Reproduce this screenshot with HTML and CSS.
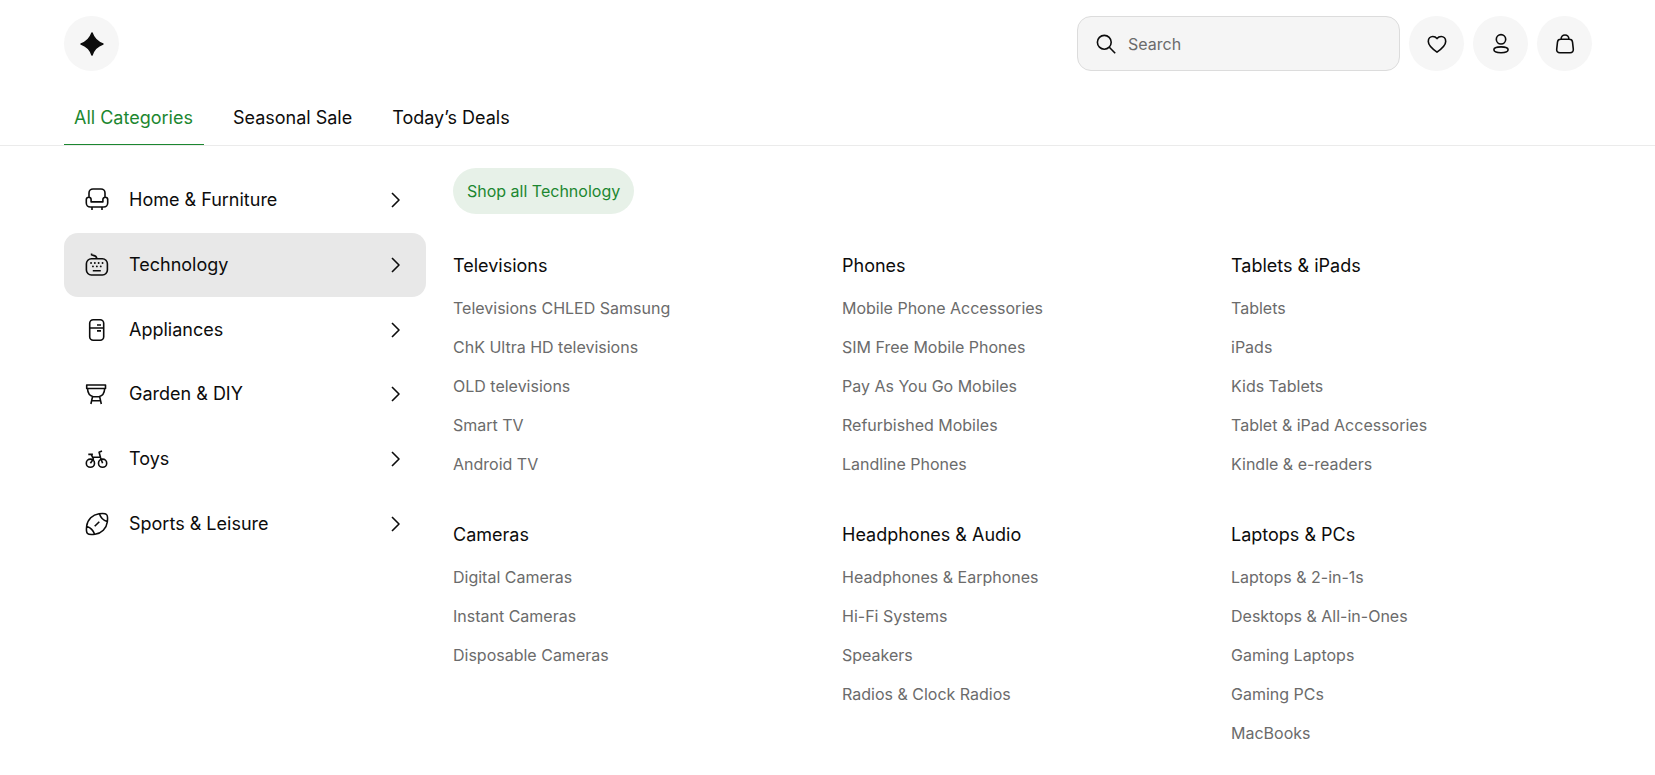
FILE: index.html
```html
<!DOCTYPE html>
<html lang="en">
<head>
<meta charset="utf-8">
<meta name="viewport" content="width=device-width, initial-scale=1">
<title>Technology</title>
<link rel="stylesheet" href="styles.css">
</head>
<body>
<header class="topbar">
  <a class="round" href="#" aria-label="Home page">
    <svg class="icon" viewBox="0 0 28 28"><path fill="currentColor" d="M14 3.100C15.700 8.100 19.300 12.100 24.900 14 19.300 15.900 15.700 19.900 14 24.900 12.300 19.900 8.700 15.900 3.100 14 8.700 12.100 12.300 8.100 14 3.100z"/></svg>
  </a>
  <div class="tools">
    <label class="search">
      <svg class="icon" viewBox="0 0 28 28"><circle cx="12.300" cy="12.300" r="6.900"/><path d="M17.300 17.300l5.900 5.900"/></svg>
      <input class="search-input" type="search" placeholder="Search" aria-label="Search">
    </label>
    <button class="round" type="button" aria-label="Wishlist">
      <svg class="icon" viewBox="0 0 28 28"><path d="M14 22.100C10 19.300 5.300 15.800 5.300 11.500c0-3 2-5 4.500-5 1.800 0 3.200.8 4.200 2.100 1-1.300 2.400-2.100 4.200-2.100 2.500 0 4.500 2 4.500 5 0 4.300-4.700 7.800-8.700 10.600z"/></svg>
    </button>
    <button class="round" type="button" aria-label="Account">
      <svg class="icon" viewBox="0 0 28 28"><circle cx="14" cy="9.300" r="4.700"/><path d="M14 16.900c4.400 0 7.100.5 7.100 2.900s-2 2.900-7.100 2.900-7.100-.5-7.100-2.900 2.700-2.900 7.100-2.900z"/></svg>
    </button>
    <button class="round" type="button" aria-label="Bag">
      <svg class="icon" viewBox="0 0 28 28"><path d="M9.700 9.300h8.600c1.800 0 3 1 3.200 2.700l.8 7.200c.2 2.200-1 3.500-3.200 3.500H8.900c-2.200 0-3.400-1.300-3.200-3.500l.8-7.200c.2-1.700 1.400-2.700 3.200-2.700zM10 9c.3-2.500 1.800-4 4-4s3.700 1.500 4 4"/></svg>
    </button>
  </div>
</header>
<nav class="tabs" aria-label="Main">
  <a class="tab tab-active" href="#">All Categories</a>
  <a class="tab" href="#">Seasonal Sale</a>
  <a class="tab" href="#">Today’s Deals</a>
</nav>
<div class="menu">
  <nav class="departments" aria-label="Departments">
    <a class="department" href="#">
      <svg class="icon" viewBox="0 0 28 28"><path d="M6 11V7a4 4 0 0 1 4-4h8a4 4 0 0 1 4 4v4M5.700 11.200a2.400 2.400 0 0 0-2.400 2.400V17a4 4 0 0 0 4 4h13.400a4 4 0 0 0 4-4v-3.400a2.400 2.400 0 0 0-4.800 0v2.300H8.100v-2.300a2.400 2.400 0 0 0-2.400-2.400zM9 21.500V24M19 21.500V24"/></svg>
      <span>Home &amp; Furniture</span>
      <svg class="chevron" viewBox="0 0 10 16"><path d="M1 1l7 7-7 7"/></svg>
    </a>
    <a class="department department-active" href="#">
      <svg class="icon" viewBox="0 0 28 28"><rect x="3.400" y="7.800" width="21" height="16.200" rx="5"/><path d="M8.600 2.600v1.300c1.500.9 4.800.1 5.200 3.600M9.800 19.700h8"/><path stroke-linecap="round" stroke-width="1.800" d="M8 12h.1M11.800 12h.1M15.600 12h.1M19.500 12h.1M9.900 15.400h.1M13.800 15.400h.1M17.700 15.400h.1"/></svg>
      <span>Technology</span>
      <svg class="chevron" viewBox="0 0 10 16"><path d="M1 1l7 7-7 7"/></svg>
    </a>
    <a class="department" href="#">
      <svg class="icon" viewBox="0 0 28 28"><rect x="6.700" y="3.700" width="14" height="20.600" rx="3.500"/><path d="M6.700 12h14M14 9h4M14 14.900h4"/></svg>
      <span>Appliances</span>
      <svg class="chevron" viewBox="0 0 10 16"><path d="M1 1l7 7-7 7"/></svg>
    </a>
    <a class="department" href="#">
      <svg class="icon" viewBox="0 0 28 28"><path d="M3.700 5h18.800v3.500H3.700zM4.500 8.500c.2 4 2.300 7.400 5.700 8.200h5.800c3.400-.8 5.500-4.200 5.700-8.200M9.500 16.800L7.900 24M16.700 16.800l1.600 7.200M8.700 20.800h8.800"/></svg>
      <span>Garden &amp; DIY</span>
      <svg class="chevron" viewBox="0 0 10 16"><path d="M1 1l7 7-7 7"/></svg>
    </a>
    <a class="department" href="#">
      <svg class="icon" viewBox="0 0 28 28"><circle cx="7.400" cy="18.200" r="4.100"/><circle cx="19.600" cy="18.200" r="4.100"/><path d="M5.300 9.400h4.600M8.200 9.400l2.200 4.600-3 4.200M9.500 12.300h7.800M19 6l-2.900 1.200 1.400 5.300 2.100 5.700"/></svg>
      <span>Toys</span>
      <svg class="chevron" viewBox="0 0 10 16"><path d="M1 1l7 7-7 7"/></svg>
    </a>
    <a class="department" href="#">
      <svg class="icon" viewBox="0 0 28 28"><path d="M16 3.700c3-.4 6.500-.3 7.500.8 1.100 1 1.200 4.500.8 7.500-.8 6.500-5.800 11.500-12.300 12.300-3 .4-6.500.3-7.500-.8-1.100-1-1.200-4.500-.8-7.500C4.500 9.500 9.500 4.500 16 3.700zM16.500 3.900c1.300 4 3.600 6.300 7.600 7.600M3.900 16.500c4 1.300 6.300 3.600 7.600 7.600M11.700 16.300l4.600-4.600"/></svg>
      <span>Sports &amp; Leisure</span>
      <svg class="chevron" viewBox="0 0 10 16"><path d="M1 1l7 7-7 7"/></svg>
    </a>
  </nav>
  <main class="panel">
    <a class="pill" href="#">Shop all Technology</a>
    <div class="groups">
      <section>
        <h2 class="group-title">Televisions</h2>
        <ul class="links">
          <li><a href="#">Televisions CHLED Samsung</a></li>
          <li><a href="#">ChK Ultra HD televisions</a></li>
          <li><a href="#">OLD televisions</a></li>
          <li><a href="#">Smart TV</a></li>
          <li><a href="#">Android TV</a></li>
        </ul>
      </section>
      <section>
        <h2 class="group-title">Phones</h2>
        <ul class="links">
          <li><a href="#">Mobile Phone Accessories</a></li>
          <li><a href="#">SIM Free Mobile Phones</a></li>
          <li><a href="#">Pay As You Go Mobiles</a></li>
          <li><a href="#">Refurbished Mobiles</a></li>
          <li><a href="#">Landline Phones</a></li>
        </ul>
      </section>
      <section>
        <h2 class="group-title">Tablets &amp; iPads</h2>
        <ul class="links">
          <li><a href="#">Tablets</a></li>
          <li><a href="#">iPads</a></li>
          <li><a href="#">Kids Tablets</a></li>
          <li><a href="#">Tablet &amp; iPad Accessories</a></li>
          <li><a href="#">Kindle &amp; e-readers</a></li>
        </ul>
      </section>
      <section>
        <h2 class="group-title">Cameras</h2>
        <ul class="links">
          <li><a href="#">Digital Cameras</a></li>
          <li><a href="#">Instant Cameras</a></li>
          <li><a href="#">Disposable Cameras</a></li>
        </ul>
      </section>
      <section>
        <h2 class="group-title">Headphones &amp; Audio</h2>
        <ul class="links">
          <li><a href="#">Headphones &amp; Earphones</a></li>
          <li><a href="#">Hi-Fi Systems</a></li>
          <li><a href="#">Speakers</a></li>
          <li><a href="#">Radios &amp; Clock Radios</a></li>
        </ul>
      </section>
      <section>
        <h2 class="group-title">Laptops &amp; PCs</h2>
        <ul class="links">
          <li><a href="#">Laptops &amp; 2-in-1s</a></li>
          <li><a href="#">Desktops &amp; All-in-Ones</a></li>
          <li><a href="#">Gaming Laptops</a></li>
          <li><a href="#">Gaming PCs</a></li>
          <li><a href="#">MacBooks</a></li>
        </ul>
      </section>
    </div>
  </main>
</div>
</body>
</html>
```

FILE: styles.css
```css
* {
  box-sizing: border-box;
}

body {
  margin: 0;
  background: #fff;
  color: #0c0c0c;
  font-family: Inter, "Liberation Sans", sans-serif;
  font-size: 18px;
  line-height: 24px;
}

a {
  color: inherit;
  text-decoration: none;
}

.icon,
.chevron {
  flex: none;
  fill: none;
  stroke: currentColor;
  stroke-width: 1.6;
  stroke-linejoin: round;
}

.icon {
  width: 28px;
  height: 28px;
}

.chevron {
  width: 10px;
  height: 16px;
  margin-left: auto;
}

.topbar {
  display: flex;
  justify-content: space-between;
  padding: 16px 63px 0 64px;
}

.tools {
  display: flex;
  gap: 9px;
}

.round {
  display: flex;
  align-items: center;
  justify-content: center;
  width: 55px;
  height: 55px;
  padding: 0;
  border: 0;
  border-radius: 50%;
  background: #f6f6f6;
  color: inherit;
}

.search {
  display: flex;
  align-items: center;
  gap: 8px;
  width: 323px;
  padding: 0 14px;
  border: 1px solid #dcdcdc;
  border-radius: 14px;
  background: #f5f5f5;
}

.search-input {
  flex: 1;
  min-width: 0;
  padding: 0;
  border: 0;
  outline: 0;
  background: transparent;
  color: inherit;
  font: inherit;
  font-size: 16px;
}

.search-input::placeholder {
  color: #6b6b6b;
  opacity: 1;
}

.tabs {
  display: flex;
  gap: 19px;
  margin-top: 19px;
  padding: 0 64px;
  border-bottom: 1px solid #ebebeb;
}

.tab {
  padding: 16px 11px 14px 10px;
  border-bottom: 1px solid transparent;
}

.tab-active {
  border-color: #1c8730;
  color: #1c8730;
}

.menu {
  display: flex;
  align-items: flex-start;
  gap: 27px;
  padding: 22px 63px 24px 64px;
}

.departments {
  display: grid;
  grid-auto-rows: 1fr;
  flex: none;
  width: 362px;
  min-height: 388px;
}

.department {
  display: flex;
  align-items: center;
  gap: 18px;
  padding: 0 25px 0 19px;
  border-radius: 14px;
}

.department-active {
  background: #e8e8e8;
}

.panel {
  flex: 1;
}

.pill {
  display: inline-block;
  padding: 11px 14px;
  border-radius: 23px;
  background: #e7f1e8;
  color: #1c8730;
  font-size: 16px;
}

.groups {
  display: grid;
  grid-template-columns: repeat(3, 1fr);
  gap: 39px 28px;
  margin-top: 40px;
}

.group-title {
  margin: 0 0 11px;
  font-size: 18px;
  font-weight: 400;
}

.links {
  margin: 0;
  padding: 0;
  list-style: none;
  color: #6b6b6b;
  font-size: 16px;
  line-height: 39px;
}
```
